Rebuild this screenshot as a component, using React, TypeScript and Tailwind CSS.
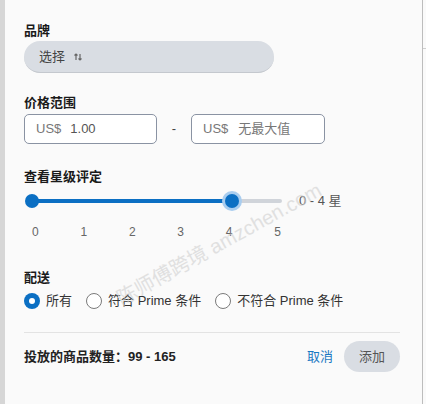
import React from 'react'

const font = { fontFamily: '"Liberation Sans", "Noto Sans CJK SC", sans-serif' }

function Radio({ checked, label }: { checked?: boolean; label: string }) {
  return (
    <label className="flex items-center gap-[6px]">
      {checked ? (
        <span className="w-[16px] h-[16px] rounded-full bg-[#0b6fc3] flex items-center justify-center">
          <span className="w-[6px] h-[6px] rounded-full bg-white" />
        </span>
      ) : (
        <span className="w-[16px] h-[16px] rounded-full border border-[#7a7a7a] bg-white" />
      )}
      <span className="text-[13px] text-[#333] leading-[18px]">{label}</span>
    </label>
  )
}

export default function App() {
  const ticks = [0, 1, 2, 3, 4, 5]

  return (
    <div className="relative w-[426px] h-[404px] flex bg-[#fafafa] overflow-hidden" style={font}>
      {/* left edge of the page behind */}
      <div className="w-[5px] h-full bg-[#d6d6d6]" />

      <div className="flex-1 flex flex-col pl-[19px] pr-[22px] pt-[22px]">
        {/* Brand */}
        <div className="text-[13px] leading-[18px] font-semibold text-[#1a1a1a]">品牌</div>
        <button className="mt-[1px] w-[250px] h-[32px] rounded-full bg-[#d9dde3] border-b border-[#c4c8ce] flex items-center pl-[15px] gap-[9px]">
          <span className="text-[13px] text-[#444]">选择</span>
          <svg width="8" height="8" viewBox="0 0 8 8" className="text-[#666]">
            <path d="M2 7V1M0.5 2.5L2 1l1.5 1.5" stroke="currentColor" strokeWidth="1.2" fill="none" />
            <path d="M6 1v6M4.5 5.5L6 7l1.5-1.5" stroke="currentColor" strokeWidth="1.2" fill="none" />
          </svg>
        </button>

        {/* Price range */}
        <div className="mt-[21px] text-[13px] leading-[18px] font-semibold text-[#1a1a1a]">价格范围</div>
        <div className="mt-[2px] flex items-center">
          <div className="w-[133px] h-[30px] rounded-[5px] border border-[#8a93a3] bg-white flex items-center pl-[11px] text-[13px]">
            <span className="text-[#777]">US$</span>
            <span className="ml-[9px] text-[#555]">1.00</span>
          </div>
          <span className="w-[34px] text-center text-[13px] text-[#444]">-</span>
          <div className="w-[134px] h-[30px] rounded-[5px] border border-[#8a93a3] bg-white flex items-center pl-[11px] text-[13px]">
            <span className="text-[#777]">US$</span>
            <span className="ml-[10px] text-[#777]">无最大值</span>
          </div>
        </div>

        {/* Star rating */}
        <div className="mt-[24px] text-[13px] leading-[18px] font-semibold text-[#1a1a1a]">查看星级评定</div>
        <div className="mt-[5px] h-[20px] flex items-center">
          <div className="relative w-[258px] h-[20px]">
            <div className="absolute left-[8px] right-0 top-[8px] h-[4px] rounded-full bg-[#d0d4da]" />
            <div className="absolute left-[8px] w-[200px] top-[8px] h-[4px] bg-[#0b6fc3]" />
            <div className="absolute left-[1px] top-[3px] w-[14px] h-[14px] rounded-full bg-[#0b6fc3]" />
            <div className="absolute left-[198px] top-0 w-[20px] h-[20px] rounded-full bg-[#a9cdef] flex items-center justify-center">
              <div className="w-[14px] h-[14px] rounded-full bg-[#0b6fc3]" />
            </div>
          </div>
          <span className="ml-[17px] text-[13px] text-[#555]">0 - 4 星</span>
        </div>
        <div className="mt-[13px] ml-[8px] w-[249px] flex justify-between text-[12px] leading-[16px] text-[#666]">
          {ticks.map(t => (
            <span key={t}>{t}</span>
          ))}
        </div>

        {/* Delivery */}
        <div className="mt-[29px] text-[13px] leading-[18px] font-semibold text-[#1a1a1a]">配送</div>
        <div className="mt-[5px] h-[18px] flex items-center gap-[14px]">
          <Radio checked label="所有" />
          <Radio label="符合 Prime 条件" />
          <Radio label="不符合 Prime 条件" />
        </div>

        <div className="mt-[22px] h-px bg-[#e3e3e3]" />

        {/* Footer */}
        <div className="mt-[8px] flex items-center">
          <span className="flex-1 text-[13px] font-semibold text-[#222]">投放的商品数量：99 - 165</span>
          <button className="text-[13px] text-[#1a78c2]">取消</button>
          <button className="ml-[11px] w-[56px] h-[31px] rounded-full bg-[#d9dde3] text-[13px] text-[#555]">添加</button>
        </div>
      </div>

      {/* right edge */}
      <div className="w-px h-full bg-[#bdbdbd]" />
      <div className="w-[3px] h-full flex flex-col">
        <div className="h-[48px]" />
        <div className="h-px bg-[#cfcfcf]" />
      </div>

      {/* watermark */}
      <span className="absolute left-[219px] top-[244px] -translate-x-1/2 -translate-y-1/2 rotate-[-29deg] whitespace-nowrap text-[20px] text-[#d0d0d0] opacity-60 pointer-events-none">
        陈师傅跨境 amzchen.com
      </span>
    </div>
  )
}
